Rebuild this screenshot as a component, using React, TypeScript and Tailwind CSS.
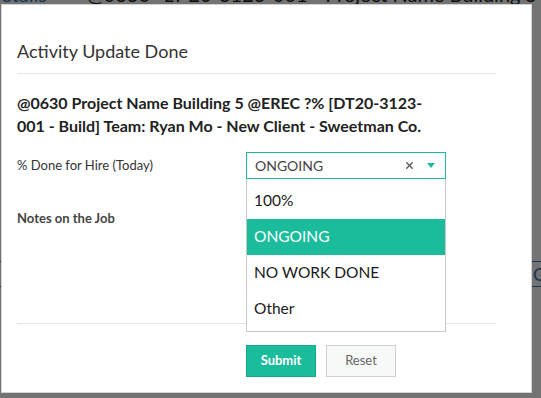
import { X } from "lucide-react";

const OPTIONS = ["100%", "ONGOING", "NO WORK DONE", "Other"];

function Dropdown({ selected }: { selected: string }) {
  return (
    <div className="absolute left-0 top-full z-10 w-full border border-t-0 border-[#c8c8c8] bg-white pb-[4px] pt-[4px]">
      {OPTIONS.map((opt) => (
        <div
          key={opt}
          className={
            opt === selected
              ? "flex h-[36px] items-center bg-[#1abc9c] pl-[7px] text-[15.5px] text-white"
              : "flex h-[36px] items-center pl-[7px] text-[15.5px] text-[#1a1a1a]"
          }
        >
          {opt}
        </div>
      ))}
    </div>
  );
}

function SelectBox() {
  return (
    <div className="relative w-[200px]">
      <div className="flex h-[27px] items-center border border-[#1abc9c] bg-white pl-[8px] pr-[10px]">
        <span className="flex-1 text-[14px] text-[#444]">ONGOING</span>
        <X className="h-[11px] w-[11px] text-[#555]" strokeWidth={3} />
        <svg className="ml-[12px]" width="8" height="5" viewBox="0 0 8 5">
          <path d="M0 0 L8 0 L4 5 Z" fill="#1abc9c" />
        </svg>
      </div>
      <Dropdown selected="ONGOING" />
    </div>
  );
}

function Backdrop() {
  // page behind the dialog, dimmed by the overlay
  return (
    <div className="absolute inset-0">
      <div className="mt-[-20px] flex h-[28px] items-end gap-[40px] text-[20px] leading-[28px]">
        <span className="ml-[-14px] text-[#337ab7]">Details</span>
        <span className="text-[#222]">@0630* LT 20-3123-001 - Project Name Building 5</span>
      </div>
      <div className="mt-[253px] flex h-[26px] items-center border-y border-[#337ab7] pl-[533px] text-[18px] text-[#337ab7]">
        Co
      </div>
    </div>
  );
}

export default function App() {
  return (
    <div
      className="relative h-[398px] w-[541px] overflow-hidden bg-white"
      style={{ fontFamily: "Lato, 'Open Sans', sans-serif" }}
    >
      <Backdrop />
      <div className="absolute inset-0 bg-black/55" />
      <div className="absolute left-[1px] top-[4px] h-[389px] w-[531px] border border-[#d4d4d4] bg-white pl-[15px] pr-[35px] pt-[34px]">
        <h2 className="text-[18px] leading-[24px] text-[#333]">Activity Update Done</h2>
        <div className="mt-[10px] border-t border-[#e5e5e5]" />
        <p className="mt-[18px] max-w-[412px] text-[16px] font-bold leading-[22.5px] text-[#222]">
          @0630 Project Name Building 5 @EREC ?% [DT20-3123-001 - Build] Team: Ryan Mo - New Client - Sweetman Co.
        </p>
        <div className="mt-[15px] flex items-center">
          <label className="w-[229px] text-[13px] text-[#333]">% Done for Hire (Today)</label>
          <SelectBox />
        </div>
        <div className="mt-[31px] flex h-[113px]">
          <label className="w-[229px] text-[13px] font-bold leading-[16px] text-[#444]">
            Notes on the Job
          </label>
        </div>
        <div className="border-t border-[#e5e5e5]" />
        <div className="mt-[21px] flex gap-[10px] pl-[229px]">
          <button className="h-[32px] w-[70px] border border-[#17a98b] bg-[#1abc9c] text-[13px] font-bold text-white">
            Submit
          </button>
          <button className="h-[32px] w-[70px] border border-[#cfcfcf] bg-[#f7f8f8] text-[13px] text-[#666]">
            Reset
          </button>
        </div>
      </div>
    </div>
  );
}
